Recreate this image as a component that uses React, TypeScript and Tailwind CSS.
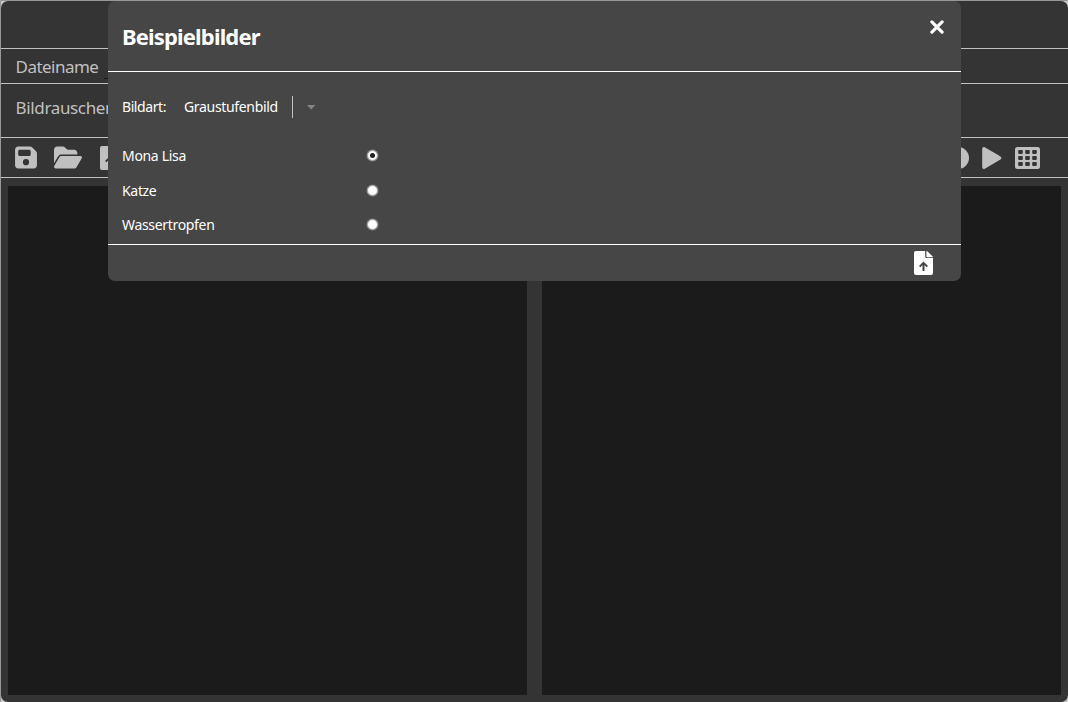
import React from "react";
import { FaFloppyDisk, FaFolderOpen } from "react-icons/fa6";

function FileUpIcon({ className, arrow }: { className: string; arrow: string }) {
  return (
    <svg viewBox="0 0 19 24" className={className} fill="none">
      <path d="M1.9 0H11.2V5.6Q11.2 7.1 12.7 7.1H19V22.1Q19 24 17.1 24H1.9Q0 24 0 22.1V1.9Q0 0 1.9 0Z" fill="currentColor" />
      <path d="M12.4 0Q13.1 0 13.6 0.5L18.5 5.3Q18.9 5.7 18.9 6.2H13.2Q12.4 6.2 12.4 5.4Z" fill="currentColor" />
      <path d="M9.5 20V12.2M5.7 15.6L9.5 11.9L13.3 15.6" stroke={arrow} strokeWidth="2" />
    </svg>
  );
}

function PlayIcon() {
  return (
    <svg viewBox="0 0 20 22" className="h-[22px] w-5" fill="currentColor">
      <path d="M0.2 2Q0.2-0.6 2.8 0.2Q3.4 0.5 18.4 9.4Q20.4 11 18.4 12.6L2.8 21.8Q0.2 22.6 0.2 20Z" />
    </svg>
  );
}

function GridIcon() {
  const columns = [3.2, 10.2, 17.2];
  const rows = [3, 9, 15];
  return (
    <svg viewBox="0 0 25 22" className="h-[22px] w-[25px]">
      <rect width="25" height="22" rx="2.5" fill="currentColor" />
      {rows.map((y) =>
        columns.map((x) => <rect key={`${x}-${y}`} x={x} y={y} width="4.6" height="3.9" rx="0.8" fill="#343434" />),
      )}
    </svg>
  );
}

function ImageOption({ label, checked }: { label: string; checked?: boolean }) {
  return (
    <label className="flex h-[34.5px] items-center">
      <span className="w-[245px] pt-px tracking-[-0.32px]">{label}</span>
      <input type="radio" name="image" defaultChecked={checked} className="peer sr-only" />
      <span className="flex size-[11px] items-center justify-center rounded-full border-[0.5px] border-[#999] bg-white shadow-[0_0_0_0.5px_#888] peer-checked:[&>i]:bg-[#222]">
        <i className="size-[5px] rounded-full" />
      </span>
    </label>
  );
}

function ExampleDialog() {
  return (
    <div className="absolute top-0 left-[107px] flex h-[280px] w-[853px] flex-col overflow-hidden rounded-[7px] bg-[#464646] text-white">
      <header className="flex h-[71px] justify-between border-b border-white pr-[17px] pl-[14px]">
        <h2 className="pt-[19px] text-[22px] leading-8 font-bold tracking-[-0.84px]">Beispielbilder</h2>
        <button className="mt-[19px] h-[14px] w-[14px]" aria-label="Schließen">
          <svg viewBox="0 0 14 14" className="size-[14px]" fill="none" stroke="currentColor" strokeWidth="3.2" strokeLinecap="round">
            <path d="M1.9 1.9L12.1 12.1M12.1 1.9L1.9 12.1" />
          </svg>
        </button>
      </header>
      <div className="flex h-[172px] flex-col px-[14px] pt-[18px] text-[14px] leading-5">
        <div className="mb-[14px] flex h-[34px] items-center">
          <span className="w-[62px] tracking-[-0.42px]">Bildart:</span>
          <span className="w-[108px] tracking-[-0.33px]">Graustufenbild</span>
          <span className="h-[22px] w-px bg-[#c0c0c0]" />
          <svg viewBox="0 0 9 5" className="ml-[14px] h-[5px] w-[9px]" fill="#858585">
            <path d="M0 0H8.5L4.2 4.5Z" />
          </svg>
        </div>
        <div className="flex flex-col pt-[0.5px]">
          <ImageOption label="Mona Lisa" checked />
          <ImageOption label="Katze" />
          <ImageOption label="Wassertropfen" />
        </div>
      </div>
      <footer className="flex flex-1 items-center justify-end border-t border-white pr-[28px]">
        <FileUpIcon className="h-6 w-[19px]" arrow="#464646" />
      </footer>
    </div>
  );
}

export default function App() {
  return (
    <div className="h-[702px] w-[1068px] overflow-hidden border-t border-l border-[#989898] bg-[#c8c8c8] font-['Noto_Sans',sans-serif]">
      <div className="relative flex h-full flex-col overflow-hidden rounded-[7px] bg-[#343434] text-[#c0c0c0]">
        <div className="h-12 border-b border-[#c0c0c0]" />
        <div className="flex h-[35px] items-start border-b border-[#c0c0c0] pl-[14.5px]">
          <span className="w-[88px] pt-[6px] text-[17px] leading-6 tracking-[-0.52px]">Dateiname</span>
          <span className="mt-[29px] h-px w-40 bg-[#181818]" />
        </div>
        <div className="flex h-[54px] border-b border-[#c0c0c0] pt-[12px] pl-[14.5px]">
          <span className="text-[17px] leading-6 tracking-[-0.35px]">Bildrauschen</span>
        </div>
        <div className="flex h-10 items-center justify-between border-b border-[#c0c0c0] pr-7 pl-[14px]">
          <div className="flex items-center">
            <FaFloppyDisk className="h-[25px] w-[22px]" />
            <FaFolderOpen className="ml-[17px] h-[25px] w-7" />
            <FileUpIcon className="ml-[17.5px] h-6 w-[19px]" arrow="#343434" />
          </div>
          <div className="flex items-center">
            <span className="mr-[13px] size-[22px] rounded-full bg-[#c0c0c0]" />
            <PlayIcon />
            <span className="w-[13px]" />
            <GridIcon />
          </div>
        </div>
        <div className="flex flex-1 gap-[15px] pt-2 pr-[7px] pb-[7px] pl-[7px]">
          <div className="flex-1 bg-[#1b1b1b]" />
          <div className="flex-1 bg-[#1b1b1b]" />
        </div>
        <ExampleDialog />
      </div>
    </div>
  );
}
